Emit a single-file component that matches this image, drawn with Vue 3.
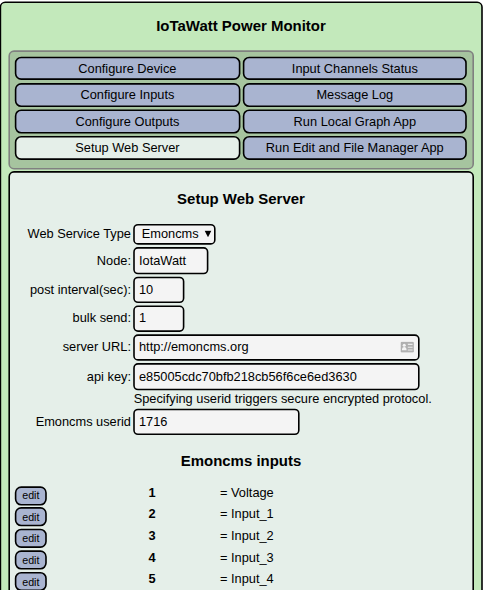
<script setup>
import { ref } from 'vue'

const active = ref('Setup Web Server')
const menu = [
  'Configure Device', 'Input Channels Status',
  'Configure Inputs', 'Message Log',
  'Configure Outputs', 'Run Local Graph App',
  'Setup Web Server', 'Run Edit and File Manager App',
]
const node = ref('IotaWatt')
const interval = ref('10')
const bulk = ref('1')
const url = ref('http://emoncms.org')
const apiKey = ref('e85005cdc70bfb218cb56f6ce6ed3630')
const userid = ref('1716')
const inputs = ['Voltage', 'Input_1', 'Input_2', 'Input_3', 'Input_4']
</script>

<template>
  <div class="viewport">
    <main class="frame">
      <h3 class="title">IoTaWatt Power Monitor</h3>
      <nav class="menu">
        <button
          v-for="item in menu"
          :key="item"
          class="menu-button"
          :class="{ active: item === active }"
          @click="active = item"
        >{{ item }}</button>
      </nav>
      <section class="panel">
        <h3 class="panel-title">Setup Web Server</h3>
        <div class="row select-row">
          <label class="label">Web Service Type</label>
          <div class="field select">
            <span>Emoncms</span>
            <svg class="arrow" width="9" height="9" viewBox="0 0 9 9"><path d="M0.3 0.5H8.7L4.5 8.7Z" /></svg>
          </div>
        </div>
        <div class="row">
          <label class="label">Node:</label>
          <input v-model="node" class="field medium" />
        </div>
        <div class="row">
          <label class="label">post interval(sec):</label>
          <input v-model="interval" class="field small" />
        </div>
        <div class="row">
          <label class="label">bulk send:</label>
          <input v-model="bulk" class="field small" />
        </div>
        <div class="row">
          <label class="label">server URL:</label>
          <div class="field wide with-icon">
            <span>{{ url }}</span>
            <svg class="card" width="17" height="14" viewBox="0 0 17 14">
              <rect x="0.2" y="0.2" width="16.6" height="13.6" rx="1.6" fill="#b0b0b0" />
              <circle cx="4.8" cy="4.6" r="1.9" fill="#f4f4f4" />
              <path d="M2 11V9.3Q2.4 7.2 4.8 7Q7.2 7.2 7.6 9.3V11Z" fill="#f4f4f4" />
              <path d="M9.3 3.6H15.2M9.3 7.1H15.2M9.3 10.6H15.2" stroke="#ececec" stroke-width="1.3" />
            </svg>
          </div>
        </div>
        <div class="row">
          <label class="label">api key:</label>
          <input v-model="apiKey" class="field wide" />
        </div>
        <p class="hint">Specifying userid triggers secure encrypted protocol.</p>
        <div class="row">
          <label class="label">Emoncms userid</label>
          <input v-model="userid" class="field user" />
        </div>
        <h3 class="inputs-title">Emoncms inputs</h3>
        <div v-for="(name, i) in inputs" :key="name" class="input-row">
          <button class="edit">edit</button>
          <b class="number">{{ i + 1 }}</b>
          <span class="name">= {{ name }}</span>
        </div>
      </section>
    </main>
  </div>
</template>

<style>
body {
  margin: 0;
  background: #fff;
}
</style>

<style scoped>
.viewport {
  width: 486px;
  height: 590px;
  overflow: hidden;
}
.frame {
  box-sizing: border-box;
  width: 603.5px;
  height: 900px;
  padding: 0 9px;
  border: 2px solid #000;
  border-radius: 7px;
  background: #c3e9bb;
  color: #000;
  font: 16px/18px "Liberation Sans", Arial, sans-serif;
  transform: translate(-0.4px, 1.5px) scale(0.8);
  transform-origin: 0 0;
}
h3 {
  margin: 0;
  font-size: 18.72px;
  line-height: 22px;
  text-align: center;
}
.title {
  padding: 18px 0 18.7px;
}
.menu {
  box-sizing: border-box;
  height: 149.5px;
  display: grid;
  grid-template-columns: 281.5px 280.5px;
  grid-auto-rows: 29.8px;
  gap: 3.25px;
  padding: 6px;
  border: 2px solid #808080;
  border-radius: 7px;
  background: #a6c49f;
}
.menu-button {
  border: 2px solid #000;
  border-radius: 8px;
  padding: 0;
  background: #a9b4d0;
  color: #000;
  font: 16px/18px "Liberation Sans", Arial, sans-serif;
}
.menu-button.active {
  background: #e5efe9;
}
.panel {
  box-sizing: border-box;
  height: 700px;
  margin-top: 1.5px;
  padding: 0 6px;
  border: 2px solid #000;
  border-radius: 7px;
  background: #e5efe9;
}
.panel-title {
  padding: 22px 0 20.7px;
}
.row {
  display: flex;
  align-items: center;
  gap: 3px;
  height: 33.25px;
  margin-bottom: 3px;
}
.label {
  width: 145.2px;
  padding-bottom: 1px;
  text-align: right;
  white-space: nowrap;
}
.field {
  box-sizing: border-box;
  height: 33.25px;
  padding: 0 5px 1px;
  border: 2px solid #000;
  border-radius: 6px;
  background: #f4f4f4;
  color: #000;
  font: 16px/18px "Liberation Sans", Arial, sans-serif;
  outline: 0;
}
.select-row {
  height: 26px;
}
.select-row .label {
  padding-bottom: 1px;
}
.select {
  display: flex;
  align-items: center;
  justify-content: space-between;
  width: 103px;
  height: 26px;
  padding: 0 3px 0 8.5px;
}
.arrow {
  margin-bottom: 2px;
}
.small { width: 64px; }
.medium { width: 94px; }
.wide { width: 358px; }
.user { width: 208px; }
.with-icon {
  display: flex;
  align-items: center;
  justify-content: space-between;
}
.hint {
  height: 18px;
  margin: -0.5px 0 3px;
  padding: 0 0 0 148.6px;
}
.inputs-title {
  padding: 18px 0 19px;
}
.input-row {
  display: grid;
  grid-template-columns: 167px 89.5px auto;
  height: 26.9px;
}
.number,
.name {
  padding-top: 1px;
}
.edit {
  width: 40px;
  height: 24px;
  margin-top: 1.2px;
  padding: 0;
  border: 2px solid #000;
  border-radius: 8px;
  background: #a9b4d0;
  color: #000;
  font: 13.333px/15px "Liberation Sans", Arial, sans-serif;
}
</style>
